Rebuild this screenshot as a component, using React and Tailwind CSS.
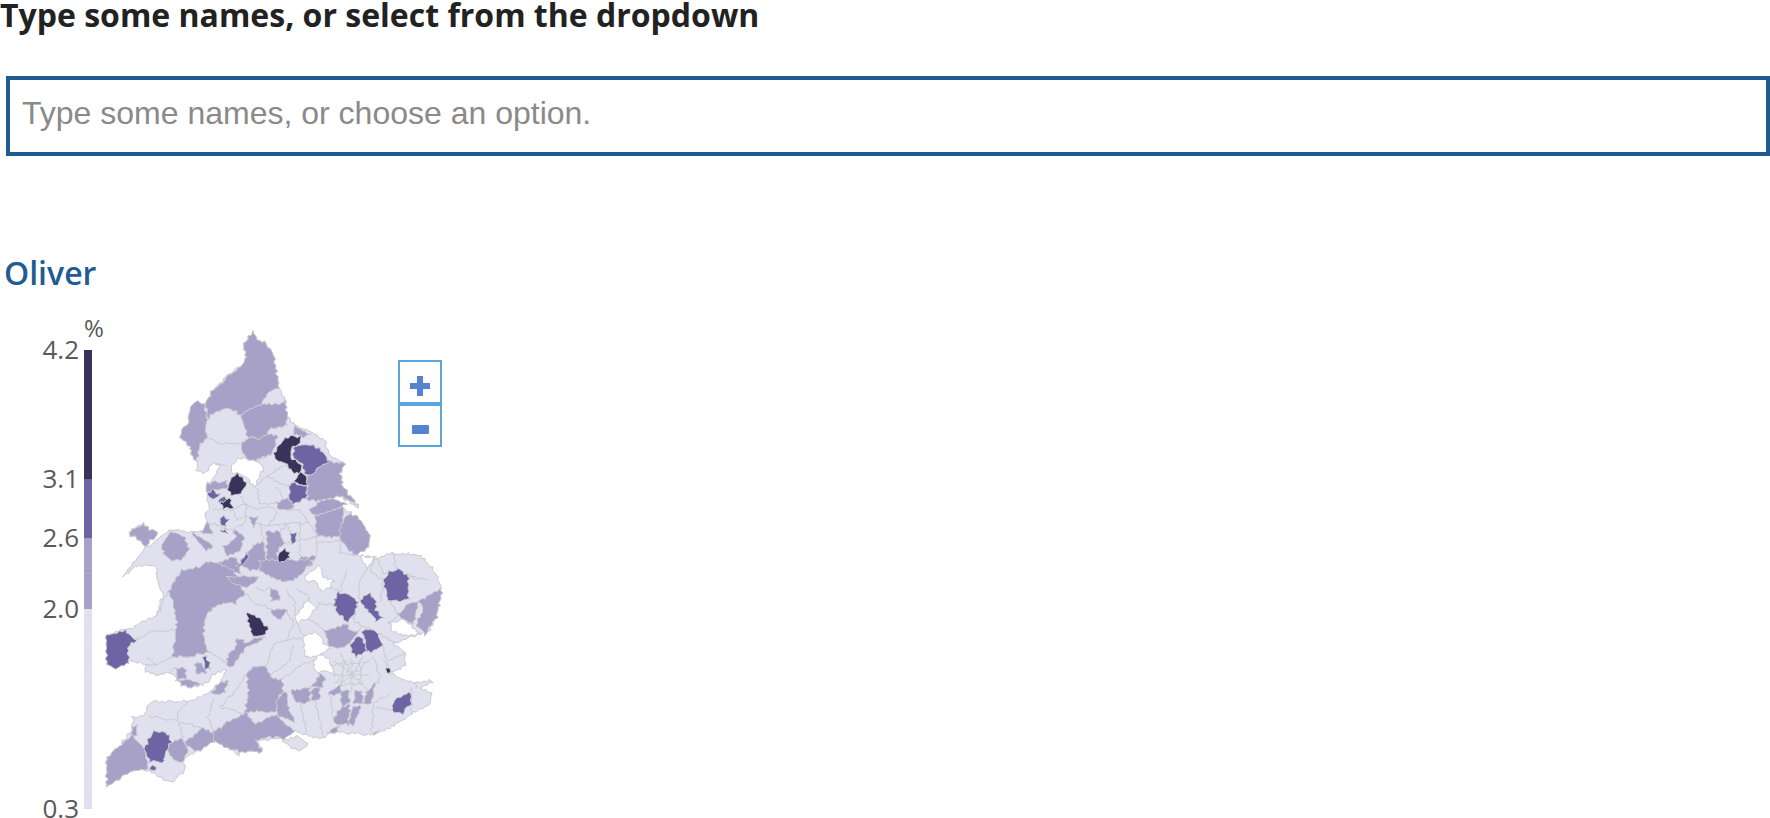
const DARK = "#39335a";
const MID = "#6e64a3";
const SOFT = "#a8a1c7";
const PALE = "#e1e0ee";
const LINE = "#c9c9cf";

// map points are in 3x px, the chart top is y=0. "s" parts are the lower half, shifted by 750
const south = (pts) =>
   pts
      .split(" ")
      .map((p) => {
         const [x, y] = p.split(",");
         return `${x},${Number(y) + 750}`;
      })
      .join(" ");

// boundaries are wiggly at this scale. noise depends on position only so shared edges stay shared
const wiggle = (x, y) => [
   x + 3 * Math.sin(y * 0.37 + x * 0.11) + 2 * Math.sin(y * 0.91),
   y + 3 * Math.sin(x * 0.41 - y * 0.07) + 2 * Math.sin(x * 0.83),
];

const rough = (pts, closed = true) => {
   const list = pts.split(" ").map((p) => p.split(",").map(Number));
   const out = [];
   const count = closed ? list.length : list.length - 1;
   for (let i = 0; i < count; i++) {
      const [x1, y1] = list[i];
      const [x2, y2] = list[(i + 1) % list.length];
      const steps = Math.max(1, Math.round(Math.hypot(x2 - x1, y2 - y1) / 9));
      for (let s = 0; s < steps; s++) {
         const t = s / steps;
         out.push(wiggle(x1 + (x2 - x1) * t, y1 + (y2 - y1) * t).map((n) => n.toFixed(1)).join(","));
      }
   }
   if (!closed) {
      const [x, y] = list[list.length - 1];
      out.push(wiggle(x, y).map((n) => n.toFixed(1)).join(","));
   }
   return out.join(" ");
};

const outline =
   "757,65 780,95 795,95 820,130 838,235 855,270 860,320 885,345 930,365 975,395 990,440 1035,462 1020,490 1030,530 1075,585 1075,595 1020,560 985,565 1050,610 1110,680 1105,710 1070,735 1130,745 1180,730 1260,735 " +
   south(
      "1310,45 1325,90 1310,170 1290,210 1260,220 1180,250 1215,280 1215,315 1165,340 1180,345 1240,370 1290,360 1298,365 1260,385 1295,400 1290,430 1235,460 1190,490 1120,525 1000,515 965,535 925,525 885,515 850,535 770,540 790,575 720,575 715,590 700,570 640,545 590,575 550,600 555,630 520,665 490,660 450,630 395,630 355,660 320,680 320,590 360,560 395,510 400,470 430,470 440,450 450,425 560,425 620,405 660,365 680,330 640,345 610,375 570,382 540,370 510,335 470,345 435,335 440,315 385,300 345,328 320,310 320,225 370,210 405,200 470,165 490,100 470,60 470,20 410,15 370,50",
   ) +
   " 440,710 450,690 478,668 450,660 430,640 385,670 405,680 440,710 470,690 510,660 570,665 600,665 625,640 615,620 630,590 620,570 625,520 650,490 660,465 640,460 610,490 590,480 595,440 580,450 570,410 541,380 548,352 565,340 575,290 615,280 640,240 680,200 740,150 730,110";

const whites = [
   "692,465 715,445 760,450 780,460 790,480 775,505 765,530 740,505 715,490 700,490",
   south("885,170 925,118 950,145 925,175 890,190"),
   south("915,50 960,15 970,50 1000,60 990,85 965,95 945,65 915,60"),
   south("910,225 950,215 975,255 990,265 960,290 915,290"),
   south("940,300 960,285 985,295 1005,345 975,335 945,335"),
   south("1165,190 1210,180 1260,220 1210,228 1180,215"),
   south("1080,-10 1125,-10 1100,25"),
];

const softs = [
   "757,65 780,95 795,95 820,130 838,235 815,243 790,265 785,285 745,300 722,315 700,300 680,295 640,310 625,325 615,280 640,240 680,205 740,150 730,110",
   "570,290 590,272 612,285 622,330 615,360 625,385 600,400 590,455 580,450 570,410 541,380 548,352 565,340",
   "722,315 745,300 785,285 835,280 855,275 862,320 860,345 810,355 800,375 775,385 745,380 730,345",
   "885,350 930,375 900,380 880,370",
   "725,400 745,385 775,385 800,375 835,375 815,435 775,445 760,460 745,450 725,430",
   "960,470 990,455 1020,460 1035,462 1020,490 1030,530 1075,585 1020,560 985,565 945,575 922,570 922,500 935,495",
   "620,520 660,515 680,515 685,530 650,540 620,545",
   "830,580 850,565 870,570 880,590 860,600 830,595",
   "930,600 960,575 1000,565 1040,580 1020,595 945,618",
   "945,620 1000,600 1030,590 1030,620 1020,680 950,680",
   "1020,650 1045,610 1075,620 1110,680 1105,710 1070,735 1040,715 1020,680",
   "385,670 410,650 430,640 450,660 478,668 450,690 440,710 405,680",
   "485,710 510,665 555,680 565,720 545,750 515,750 490,735",
   "575,665 600,680 640,710 615,720 590,690",
   "600,665 625,640 640,670 620,672",
   "700,660 735,680 720,720 680,740 670,710 710,685",
   "610,770 660,755 700,740 720,760 720,790 610,790",
   "750,620 775,620 760,650",
   "760,705 790,695 800,770 750,780 720,760",
   "800,665 840,665 850,700 830,730 870,780 800,780",
   "900,740 945,740 930,770 880,780",
   south("505,95 545,30 605,22 615,5 660,10 700,30 735,100 705,130 660,130 640,145 615,175 610,230 625,275 570,290 515,290 525,240 530,185 520,130"),
   south("680,50 750,50 780,50 740,85 700,70"),
   south("780,0 940,0 900,50 870,65 830,60 780,30"),
   south("810,85 835,90 840,120 815,125"),
   south("810,150 835,145 860,150 840,178 820,165"),
   south("735,250 760,235 800,230 770,250 745,255 720,290 700,320 680,315 685,280 705,270 710,235 730,240"),
   south("1255,125 1320,85 1325,100 1310,170 1275,225 1250,195 1270,140"),
   south("1195,165 1225,130 1255,125 1240,195 1210,180"),
   south("975,215 1000,205 1040,190 1050,215 1080,210 1050,250 1015,265 985,255"),
   south("600,305 610,320 620,340 590,340 585,310"),
   south("530,325 555,320 560,355 530,360"),
   south("535,360 565,360 605,375 570,382 540,370"),
   south("635,400 660,365 685,360 675,395 650,405"),
   south("770,320 800,318 810,350 845,360 850,395 830,420 830,455 735,455 745,400 740,340"),
   south("830,420 860,395 865,440 885,490 870,480 840,470 830,455"),
   south("735,455 765,490 800,475 830,465 885,515 850,535 810,530 770,545 790,575 720,575 700,570 640,545 640,515 690,480 730,460"),
   south("555,545 610,505 640,520 640,545 590,575 570,560"),
   south("500,570 515,545 545,535 565,570 550,605 520,600"),
   south("320,590 360,560 395,525 435,570 445,630 395,630 355,660 320,680"),
   south("395,500 410,495 410,525 395,525"),
   south("870,390 930,385 930,425 890,430"),
   south("935,385 960,385 958,420 935,422"),
   south("935,380 960,340 975,355 960,385"),
   south("1020,395 1045,390 1050,430 1025,440"),
   south("1025,440 1050,435 1045,495 1005,490 1000,480"),
   south("1060,440 1085,435 1060,495 1045,490"),
   south("1065,395 1085,390 1090,430 1060,430"),
   south("1100,395 1125,370 1115,430 1090,430"),
   south("985,400 1020,375 1025,395 1000,405"),
   south("980,520 1020,495 1010,515"),
   south("1120,520 1135,510 1125,525"),
];

const mids = [
   "880,415 900,405 940,405 965,420 990,455 960,470 935,495 920,495 905,465 880,440",
   "868,530 875,518 900,528 920,525 920,560 900,575 880,585 868,565",
   "625,550 640,538 658,555 640,567 628,565",
   "655,570 675,560 680,570 660,578",
   "658,625 670,618 685,630 675,650 665,645",
   "660,660 675,655 685,668 665,668",
   "720,760 740,725 745,745 725,770 710,770",
   "873,668 890,670 885,700 872,700",
   south("318,225 375,210 410,240 385,260 385,310 345,328 320,310"),
   south("1150,60 1170,35 1200,28 1225,50 1225,115 1205,125 1165,120"),
   south("1000,135 1015,95 1050,105 1075,125 1060,165 1040,185 1015,160"),
   south("1078,120 1110,100 1130,125 1125,150 1145,170 1130,182 1105,155 1095,145"),
   south("1052,255 1070,230 1090,235 1100,270 1070,290 1055,275"),
   south("1088,215 1115,205 1135,220 1148,260 1115,275 1100,270 1095,240"),
   south("1175,435 1200,410 1230,395 1235,430 1205,460 1180,455"),
   south("610,290 620,290 632,325 615,325"),
   south("432,565 460,515 495,515 515,545 500,570 490,605 450,605"),
   south("450,620 470,620 465,632 450,628"),
];

const darks = [
   "820,430 840,400 865,380 905,378 895,405 875,410 872,440 905,470 900,490 880,490 860,465 845,455 825,450",
   "885,505 905,488 920,500 922,525 900,527 885,515",
   "690,510 710,492 735,510 740,520 725,550 695,557 683,540",
   "657,575 670,575 690,565 697,595 670,597",
   "835,725 855,715 870,730 870,745 850,752 835,755",
   south("738,155 755,165 780,175 795,195 808,210 790,225 760,230 750,205 745,180"),
   south("1160,325 1170,323 1170,338 1160,338"),
];

// district borders that sit inside the pale areas
const borders = [
   "690,600 730,580 770,600 810,590 830,610 800,650 770,640",
   "720,560 740,590 735,640 700,660",
   "770,530 780,580 830,580",
   "860,600 900,600 930,640 950,680 950,740",
   "800,650 850,640 900,640 930,640",
   "850,700 900,690 950,680",
   "900,640 900,740",
   "1020,680 1020,730 1070,735",
   "625,385 660,400 725,400",
   "625,330 640,310",
   "760,460 780,445 815,435",
   "640,460 680,470",
   "800,500 860,465",
   "765,530 800,500 868,530",
   "850,565 830,530",
   "700,600 710,630 740,620",
   "640,600 690,600",
   "625,640 700,660",
   "780,640 790,695",
   "840,665 860,640 880,690",
   "950,700 1020,690",
   "1130,745 1150,790 1190,790",
   "1180,730 1190,790 1250,800",
   south("470,165 505,95"),
   south("600,130 630,95 620,80 635,55"),
   south("400,240 460,215 530,210"),
   south("470,315 515,290 570,290"),
   south("625,275 680,310"),
   south("735,100 760,130 800,140 810,150"),
   south("760,80 780,90 810,85"),
   south("860,150 880,190 860,240 820,250 800,318"),
   south("910,225 890,190"),
   south("1000,135 960,130 950,145"),
   south("925,175 960,200 975,215"),
   south("1075,125 1060,180 1090,200 1115,205"),
   south("1140,130 1150,60"),
   south("1165,120 1195,165 1165,190"),
   south("1135,220 1190,250"),
   south("1040,30 1020,95"),
   south("1125,-5 1110,30 1150,60"),
   south("1225,50 1280,60"),
   south("850,240 910,235"),
   south("845,360 880,330 940,300"),
   south("810,350 870,300 880,250"),
   south("890,90 930,110 925,118"),
   south("860,90 885,130 885,170"),
   south("990,85 1020,95"),
   south("1100,25 1078,60 1078,120"),
   south("1000,300 1055,345 1110,300"),
   south("1020,280 1055,345 1090,290"),
   south("1000,345 1055,345 1110,345"),
   south("1010,385 1055,345 1100,385"),
   south("1055,290 1055,395"),
   south("1030,310 1080,310 1085,370 1025,375 1030,310"),
   south("990,320 1040,300"),
   south("1000,370 1030,345"),
   south("1120,290 1140,350 1125,370"),
   south("1150,300 1180,345"),
   south("1148,260 1160,300 1215,280"),
   south("1170,400 1120,430 1115,520"),
   south("1235,380 1235,460"),
   south("900,430 920,520"),
   south("945,425 970,530"),
   south("990,400 1000,480"),
   south("1130,440 1180,455"),
   south("1250,385 1240,370"),
   south("640,420 625,470 640,515"),
   south("560,425 530,460 550,535"),
   south("450,470 520,480 610,505"),
   south("740,340 700,400 660,440"),
   south("660,440 730,460"),
   south("440,290 470,315 440,315"),
   south("510,335 530,325"),
];

const Poly = ({ points, fill, stroke = LINE }) => (
   <polygon points={rough(points)} fill={fill} stroke={stroke} strokeWidth="3" strokeLinejoin="round" />
);

const EnglandWalesMap = () => (
   <svg className="h-[508px] w-[368px] shrink-0" viewBox="276 0 1104 1524" fill="none">
      <Poly points={outline} fill={PALE} />
      <Poly points={south("850,540 890,530 925,550 900,575 875,565")} fill={PALE} />
      {borders.map((d) => (
         <polyline key={d} points={rough(d, false)} stroke={LINE} strokeWidth="3" />
      ))}
      {softs.map((d) => (
         <Poly key={d} points={d} fill={SOFT} />
      ))}
      {whites.map((d) => (
         <Poly key={d} points={d} fill="#ffffff" />
      ))}
      {mids.map((d) => (
         <Poly key={d} points={d} fill={MID} />
      ))}
      {darks.map((d) => (
         <Poly key={d} points={d} fill={DARK} />
      ))}
   </svg>
);

const legend = [
   { label: "4.2", height: "h-[129px]", bar: <span className="block h-full bg-[#39335a]" /> },
   { label: "3.1", height: "h-[59px]", bar: <span className="block h-full bg-[#6e64a3]" /> },
   {
      label: "2.6",
      height: "h-[71px]",
      bar: (
         <span className="flex h-full flex-col justify-between bg-[#a8a1c7] pt-[35px]">
            <span className="h-px bg-[#b3adcf]" />
         </span>
      ),
   },
   {
      label: "2.0",
      height: "h-[200px]",
      bar: (
         <span className="flex h-full flex-col bg-[#e1e0ee] pt-[35px]">
            <span className="h-px bg-[#e9e8f3]" />
            <span className="mt-[34px] h-px bg-[#e9e8f3]" />
            <span className="mt-[81px] h-px bg-[#e9e8f3]" />
         </span>
      ),
   },
   { label: "0.3", height: "h-0", bar: null },
];

const Legend = () => (
   <div className="w-[92px] shrink-0 pt-[5px] text-[26px] leading-[26px] text-[#595959]">
      <div className="h-[35px] pl-[84px] text-[24px]">%</div>
      {legend.map((row) => (
         <div key={row.label} className={`flex ${row.height}`}>
            <span className="-mt-[14px] h-[26px] w-[79px] text-right">{row.label}</span>
            <span className="ml-[5px] w-[8px]">{row.bar}</span>
         </div>
      ))}
   </div>
);

const App = () => {
   return (
      <div className="h-[818px] overflow-hidden bg-white font-['Open_Sans',sans-serif]">
         <h1 className="h-[76px] text-[32px] leading-[29px] font-bold text-[#222222]">
            Type some names, or select from the dropdown
         </h1>

         <div className="pl-[6px]">
            <input
               type="text"
               placeholder="Type some names, or choose an option."
               className="h-[80px] w-full border-4 border-[#1f5c92] px-[12px] pb-[6px] font-['Liberation_Sans',sans-serif] text-[32px] outline-none placeholder:text-[#8a8a8a]"
            />
         </div>

         <h2 className="mt-[97px] h-[57px] pl-[4px] text-[32px] leading-[40px] font-semibold text-[#1f5c92]">
            Oliver
         </h2>

         <div className="relative flex">
            <Legend />
            <EnglandWalesMap />
            <div className="absolute top-[50px] left-[398px] flex w-[44px] flex-col border-2 border-[#5aa7e0]">
               <button className="flex h-[44px] items-center justify-center border-b-4 border-[#5aa7e0] pt-[8px]">
                  <svg className="h-[20px] w-[20px]" viewBox="0 0 20 20">
                     <path d="M7 0h6v7h7v6h-7v7H7v-7H0V7h7z" fill="#5682d0" />
                  </svg>
               </button>
               <button className="flex h-[39px] items-center justify-center pt-[7px]">
                  <span className="h-[9px] w-[17px] rounded-[1px] bg-[#5682d0]" />
               </button>
            </div>
         </div>
      </div>
   );
};

export default App;
